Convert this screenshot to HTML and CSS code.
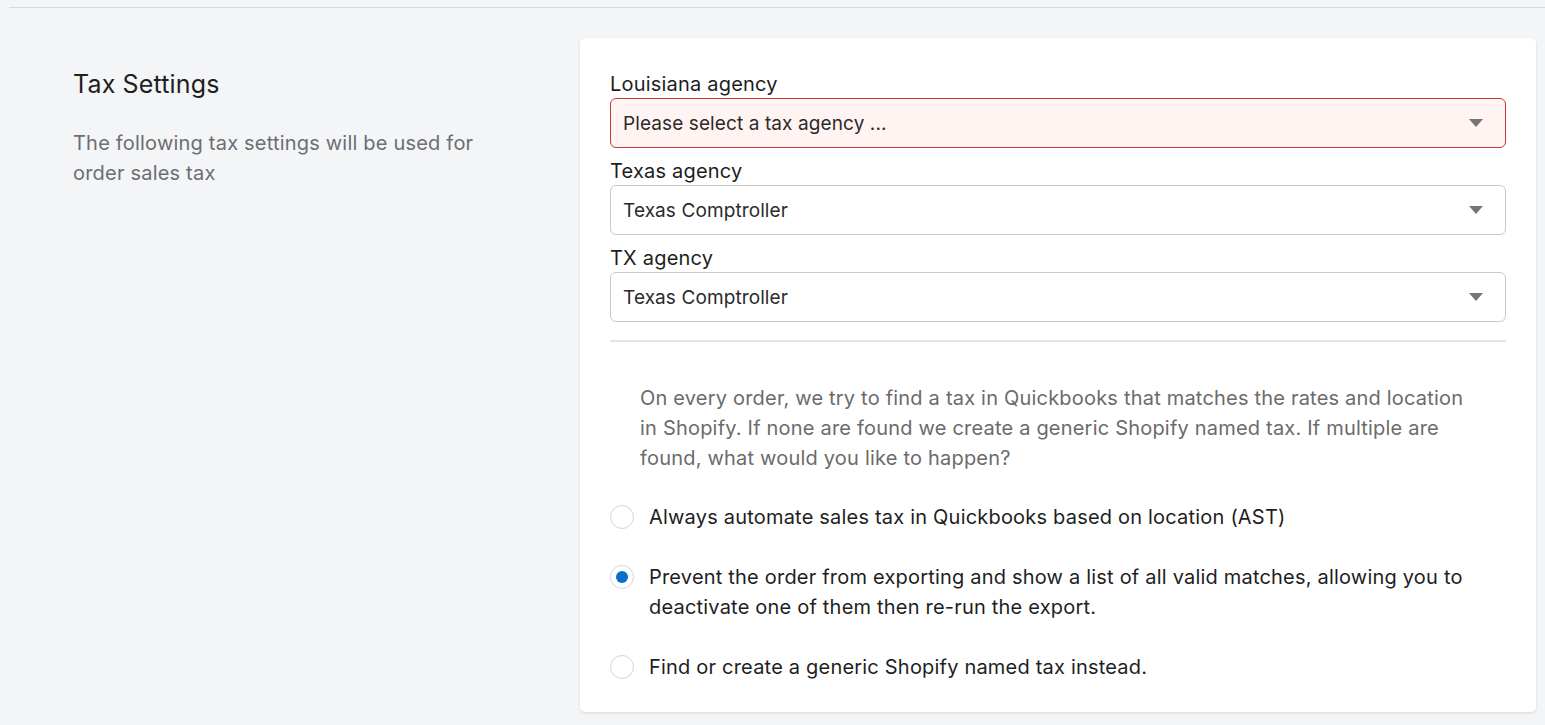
FILE: index.html
```html
<!DOCTYPE html>
<html lang="en">
<head>
<meta charset="utf-8">
<title>Tax Settings</title>
<link rel="stylesheet" href="styles.css">
</head>
<body>
<div class="topbar"></div>
<section class="settings">
  <div class="intro">
    <h2 class="intro-title">Tax Settings</h2>
    <p class="intro-text">The following tax settings will be used for order sales tax</p>
  </div>
  <div class="card">
    <div class="field">
      <label class="field-label">Louisiana agency</label>
      <div class="select select-error">
        <span class="select-value">Please select a tax agency ...</span>
        <svg class="select-arrow" width="14" height="8" viewBox="0 0 14 8"><path d="M0 0h14L7 8z" fill="#757575"/></svg>
      </div>
    </div>
    <div class="field">
      <label class="field-label">Texas agency</label>
      <div class="select">
        <span class="select-value">Texas Comptroller</span>
        <svg class="select-arrow" width="14" height="8" viewBox="0 0 14 8"><path d="M0 0h14L7 8z" fill="#757575"/></svg>
      </div>
    </div>
    <div class="field">
      <label class="field-label">TX agency</label>
      <div class="select">
        <span class="select-value">Texas Comptroller</span>
        <svg class="select-arrow" width="14" height="8" viewBox="0 0 14 8"><path d="M0 0h14L7 8z" fill="#757575"/></svg>
      </div>
    </div>
    <hr class="divider">
    <p class="explain">On every order, we try to find a tax in Quickbooks that matches the rates and location in Shopify. If none are found we create a generic Shopify named tax. If multiple are found, what would you like to happen?</p>
    <div class="radios">
      <label class="radio">
        <span class="radio-dot"></span>
        <span class="radio-text">Always automate sales tax in Quickbooks based on location (AST)</span>
      </label>
      <label class="radio">
        <span class="radio-dot checked"></span>
        <span class="radio-text">Prevent the order from exporting and show a list of all valid matches, allowing you to deactivate one of them then re-run the export.</span>
      </label>
      <label class="radio">
        <span class="radio-dot"></span>
        <span class="radio-text">Find or create a generic Shopify named tax instead.</span>
      </label>
    </div>
  </div>
</section>
</body>
</html>
```
FILE: styles.css
```css
* { box-sizing: border-box; }
html, body { margin: 0; padding: 0; }
body {
  background: #f4f5f7;
  font-family: Inter, "Noto Sans", "Liberation Sans", sans-serif;
  color: #1e1e1e;
  height: 725px;
  overflow: hidden;
}
.topbar {
  height: 8px;
  margin-left: 9px;
  border-bottom: 1px solid #d6dadf;
}
.settings {
  display: flex;
  padding: 30px 9px 0 0;
}
.intro {
  width: 580px;
  flex: none;
  padding: 30px 0 0 73px;
}
.intro-title {
  margin: 0;
  font-size: 25px;
  font-weight: 400;
  line-height: 32px;
  letter-spacing: 0.15px;
  color: #1f1f1f;
}
.intro-text {
  margin: 28px 0 0;
  width: 420px;
  font-size: 20px;
  line-height: 30px;
  letter-spacing: 0.2px;
  color: #6b6e73;
}
.card {
  flex: 1;
  background: #fff;
  border-radius: 5px;
  box-shadow: 0 1px 3px rgba(0,0,0,0.12);
  padding: 32px 30px 30px;
}
.field + .field { margin-top: 9px; }
.field-label {
  display: block;
  font-size: 20px;
  line-height: 28px;
  letter-spacing: 0.2px;
  color: #1e1e1e;
}
.select {
  height: 50px;
  border: 1px solid #c9c9c9;
  border-radius: 6px;
  display: flex;
  align-items: center;
  justify-content: space-between;
  padding: 0 22px 0 12px;
  background: #fff;
}
.select-error {
  border-color: #c53b34;
  background: #fff4f2;
}
.select-value {
  font-size: 19px;
  letter-spacing: 0.1px;
  color: #2b2b2b;
}
.divider {
  margin: 18px 0 0;
  border: 0;
  border-top: 2px solid #e3e3e3;
}
.explain {
  margin: 41px 0 0;
  padding: 0 30px;
  font-size: 20px;
  line-height: 30px;
  letter-spacing: 0.2px;
  color: #6b6b6b;
}
.radios {
  margin-top: 29px;
  display: flex;
  flex-direction: column;
  gap: 30px;
}
.radio {
  display: flex;
  align-items: flex-start;
  gap: 15px;
}
.radio-dot {
  flex: none;
  width: 24px;
  height: 24px;
  margin-top: 3px;
  border-radius: 50%;
  border: 1px solid #d0d5dc;
  background: #fff;
  display: flex;
  align-items: center;
  justify-content: center;
}
.radio-dot.checked::after {
  content: "";
  width: 12px;
  height: 12px;
  border-radius: 50%;
  background: #0a6ccd;
}
.radio-text {
  font-size: 20px;
  line-height: 30px;
  letter-spacing: 0.2px;
  color: #1e1e1e;
}
```
